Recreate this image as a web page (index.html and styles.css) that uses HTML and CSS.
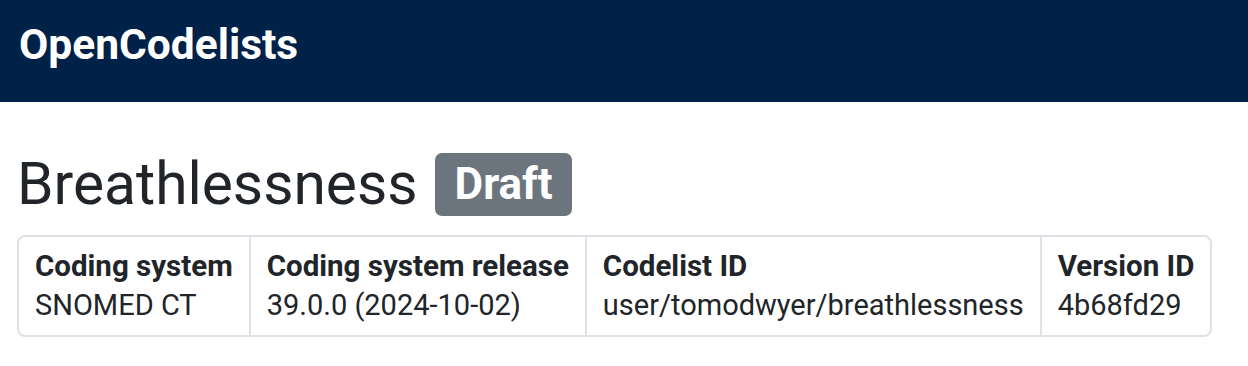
FILE: index.html
```
<!DOCTYPE html>
<html lang="en">
<head>
  <meta charset="UTF-8">
  <title>Breathlessness - OpenCodelists</title>
  <link rel="stylesheet" href="styles.css">
</head>
<body>
  <header class="site-header">
    <span class="brand">OpenCodelists</span>
  </header>
  <main class="page">
    <div class="title-row">
      <h1 class="title">Breathlessness</h1>
      <span class="badge">Draft</span>
    </div>
    <div class="meta">
      <div class="meta-cell">
        <div class="meta-label">Coding system</div>
        <div class="meta-value">SNOMED CT</div>
      </div>
      <div class="meta-cell">
        <div class="meta-label">Coding system release</div>
        <div class="meta-value">39.0.0 (2024-10-02)</div>
      </div>
      <div class="meta-cell">
        <div class="meta-label">Codelist ID</div>
        <div class="meta-value">user/tomodwyer/breathlessness</div>
      </div>
      <div class="meta-cell">
        <div class="meta-label">Version ID</div>
        <div class="meta-value">4b68fd29</div>
      </div>
    </div>
  </main>
</body>
</html>
```

FILE: styles.css
```
/* Base */
html, body {
  margin: 0;
  padding: 0;
}
body {
  font-family: Roboto, "Liberation Sans", sans-serif;
  color: #212529;
  background: #ffffff;
}

/* Top bar */
.site-header {
  height: 102px;
  box-sizing: border-box;
  padding: 21px 19px 0;
  background: #002249;
}
.brand {
  color: #ffffff;
  font-weight: 700;
  font-size: 42.5px;
  line-height: 48px;
}

/* Page body */
.page {
  padding: 0 17px;
}
.title-row {
  display: flex;
  align-items: center;
  gap: 17px;
  margin-top: 51px;
  margin-bottom: 19px;
}
.title {
  margin: 0;
  font-size: 58.7px;
  font-weight: 400;
  line-height: 63px;
}
.badge {
  display: inline-block;
  padding: 6px 19px 6px 20px;
  background: #6c757d;
  color: #ffffff;
  font-size: 44px;
  font-weight: 700;
  line-height: 51px;
  border-radius: 7px;
}

/* Codelist metadata table */
.meta {
  display: inline-flex;
  border: 2px solid #dee2e6;
  border-radius: 8px;
}
.meta-cell {
  padding: 10px 16px;
  font-size: 29px;
  line-height: 39px;
  white-space: nowrap;
}
.meta-cell + .meta-cell {
  border-left: 2px solid #dee2e6;
}
.meta-label {
  font-weight: 700;
  font-size: 29.5px;
}
```
